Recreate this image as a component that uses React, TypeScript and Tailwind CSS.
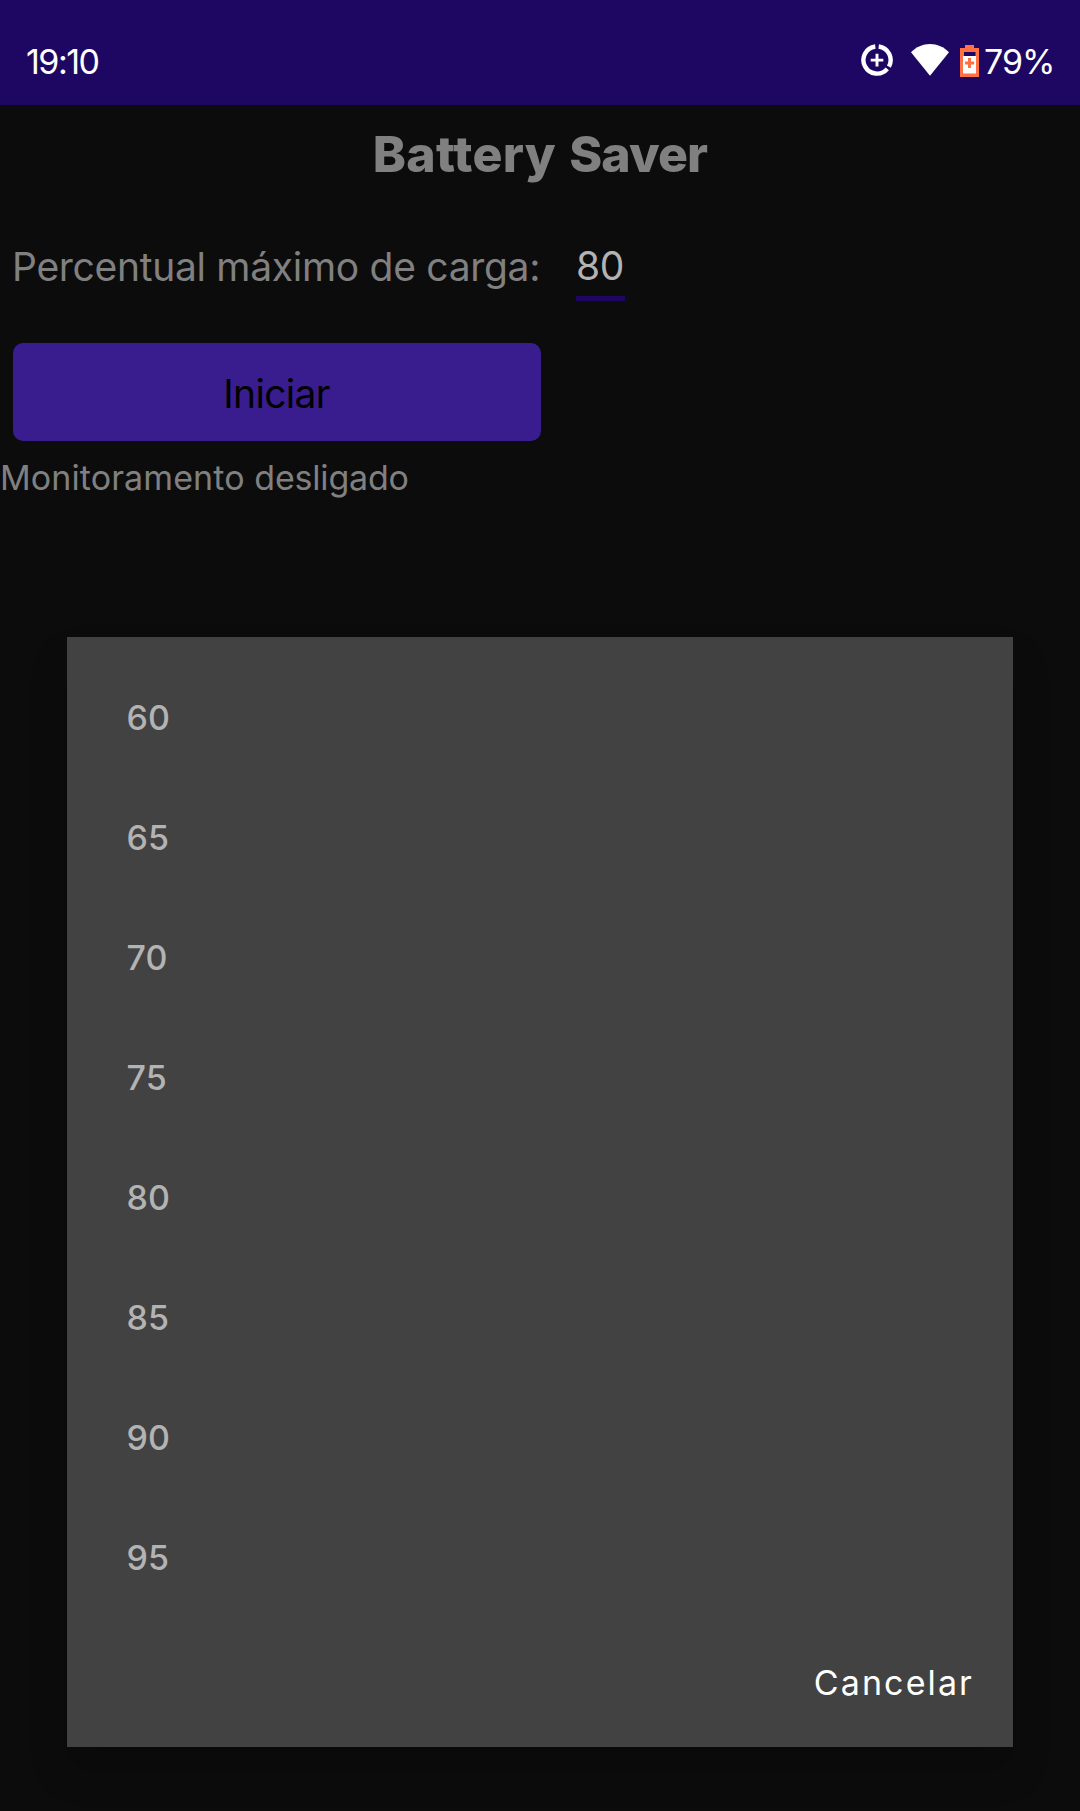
const options = ['60', '65', '70', '75', '80', '85', '90', '95'];

function DataSaverIcon() {
  return (
    <svg width="32" height="32" viewBox="0 0 32 32" fill="none" stroke="#fff">
      <path d="M17.7 2.5A13.6 13.6 0 0 1 27.9 22.6" strokeWidth="4.4" />
      <path d="M26.3 24.9A13.6 13.6 0 1 1 14.3 2.5" strokeWidth="4.4" />
      <path d="M16 9.8v12.6M9.7 16.1h12.6" strokeWidth="2.9" />
    </svg>
  );
}

function WifiIcon() {
  return (
    <svg width="38" height="32" viewBox="0 0 38 32">
      <path d="M0 8.3C5 3 12 0 19 0s14 3 19 8.3L19 31.7z" fill="#fff" />
    </svg>
  );
}

function BatteryIcon() {
  return (
    <svg width="19" height="32" viewBox="0 0 19 32">
      <path d="M5 0h9v3h5v29H0V3h5z" fill="#ff7043" />
      <path d="M4 7h11.500v4H4z" fill="#1e0763" />
      <path d="M3 11h13v17.5H3z" fill="#fff" />
      <path d="M8 13h3v3.4h3.2v3H11V23H8v-3.600H5v-3h3z" fill="#ff7043" />
    </svg>
  );
}

export default function App() {
  return (
    <div className="relative h-[1811px] w-[1080px] overflow-hidden bg-[#0c0c0c] font-['Inter',sans-serif] whitespace-nowrap text-[#808080]">
      <header className="flex h-[105px] items-start justify-between bg-[#1e0763] pt-[42px] pr-[26px] pl-[26px] text-white">
        <time className="text-[34px] leading-[40px] tracking-[-1.5px]">19:10</time>
        <div className="flex items-start">
          <span className="mt-[2px] mr-[18px]"><DataSaverIcon /></span>
          <span className="mt-[2px] mr-[11px]"><WifiIcon /></span>
          <span className="mt-[3px] mr-[5px]"><BatteryIcon /></span>
          <span className="w-[70px] text-[34px] leading-[40px] tracking-[-1px]">79%</span>
        </div>
      </header>

      <main>
        <h1 className="h-[98px] text-center text-[50px] leading-[98px] font-extrabold">
          <span className="tracking-[0.3px]">Battery </span>
          <span className="ml-[2px] tracking-[-0.9px]">Saver</span>
        </h1>
        <div className="flex h-[140px] items-start pt-[34px] pl-[12px]">
          <label className="w-[564px] text-[39px] leading-[60px] tracking-[-0.3px]">Percentual máximo de carga:</label>
          <div className="h-[64px] w-[49px] border-b-5 border-[#1e0763] text-[39px] leading-[58px] tracking-[-0.3px] text-[#b3b3b3]">80</div>
        </div>
        <button className="ml-[12.5px] block h-[98px] w-[528px] rounded-[10px] bg-[#391d8e] pt-[4px] text-[39px] tracking-[-0.7px] text-black">Iniciar</button>
        <p className="pt-[13px] text-[34px] leading-[48px]">
          <span className="tracking-[0.1px]">Monitoramento </span>
          <span className="tracking-[-0.2px]">desligado</span>
        </p>
      </main>

      <section role="dialog" className="absolute top-[637px] left-[67px] flex h-[1110px] w-[946px] flex-col bg-[#424242] pt-[21px] shadow-[0_24px_36px_rgba(0,0,0,0.2)]">
        <ul>
          {options.map((option) => (
            <li key={option} className="h-[120px] pl-[59.500px] text-[34px] leading-[120px] font-medium tracking-[0.2px] text-[#b3b3b3]">{option}</li>
          ))}
        </ul>
        <button className="mt-[55px] mr-[39px] self-end text-[34px] leading-[20px] tracking-[2.100px] text-white">Cancelar</button>
      </section>
    </div>
  );
}
